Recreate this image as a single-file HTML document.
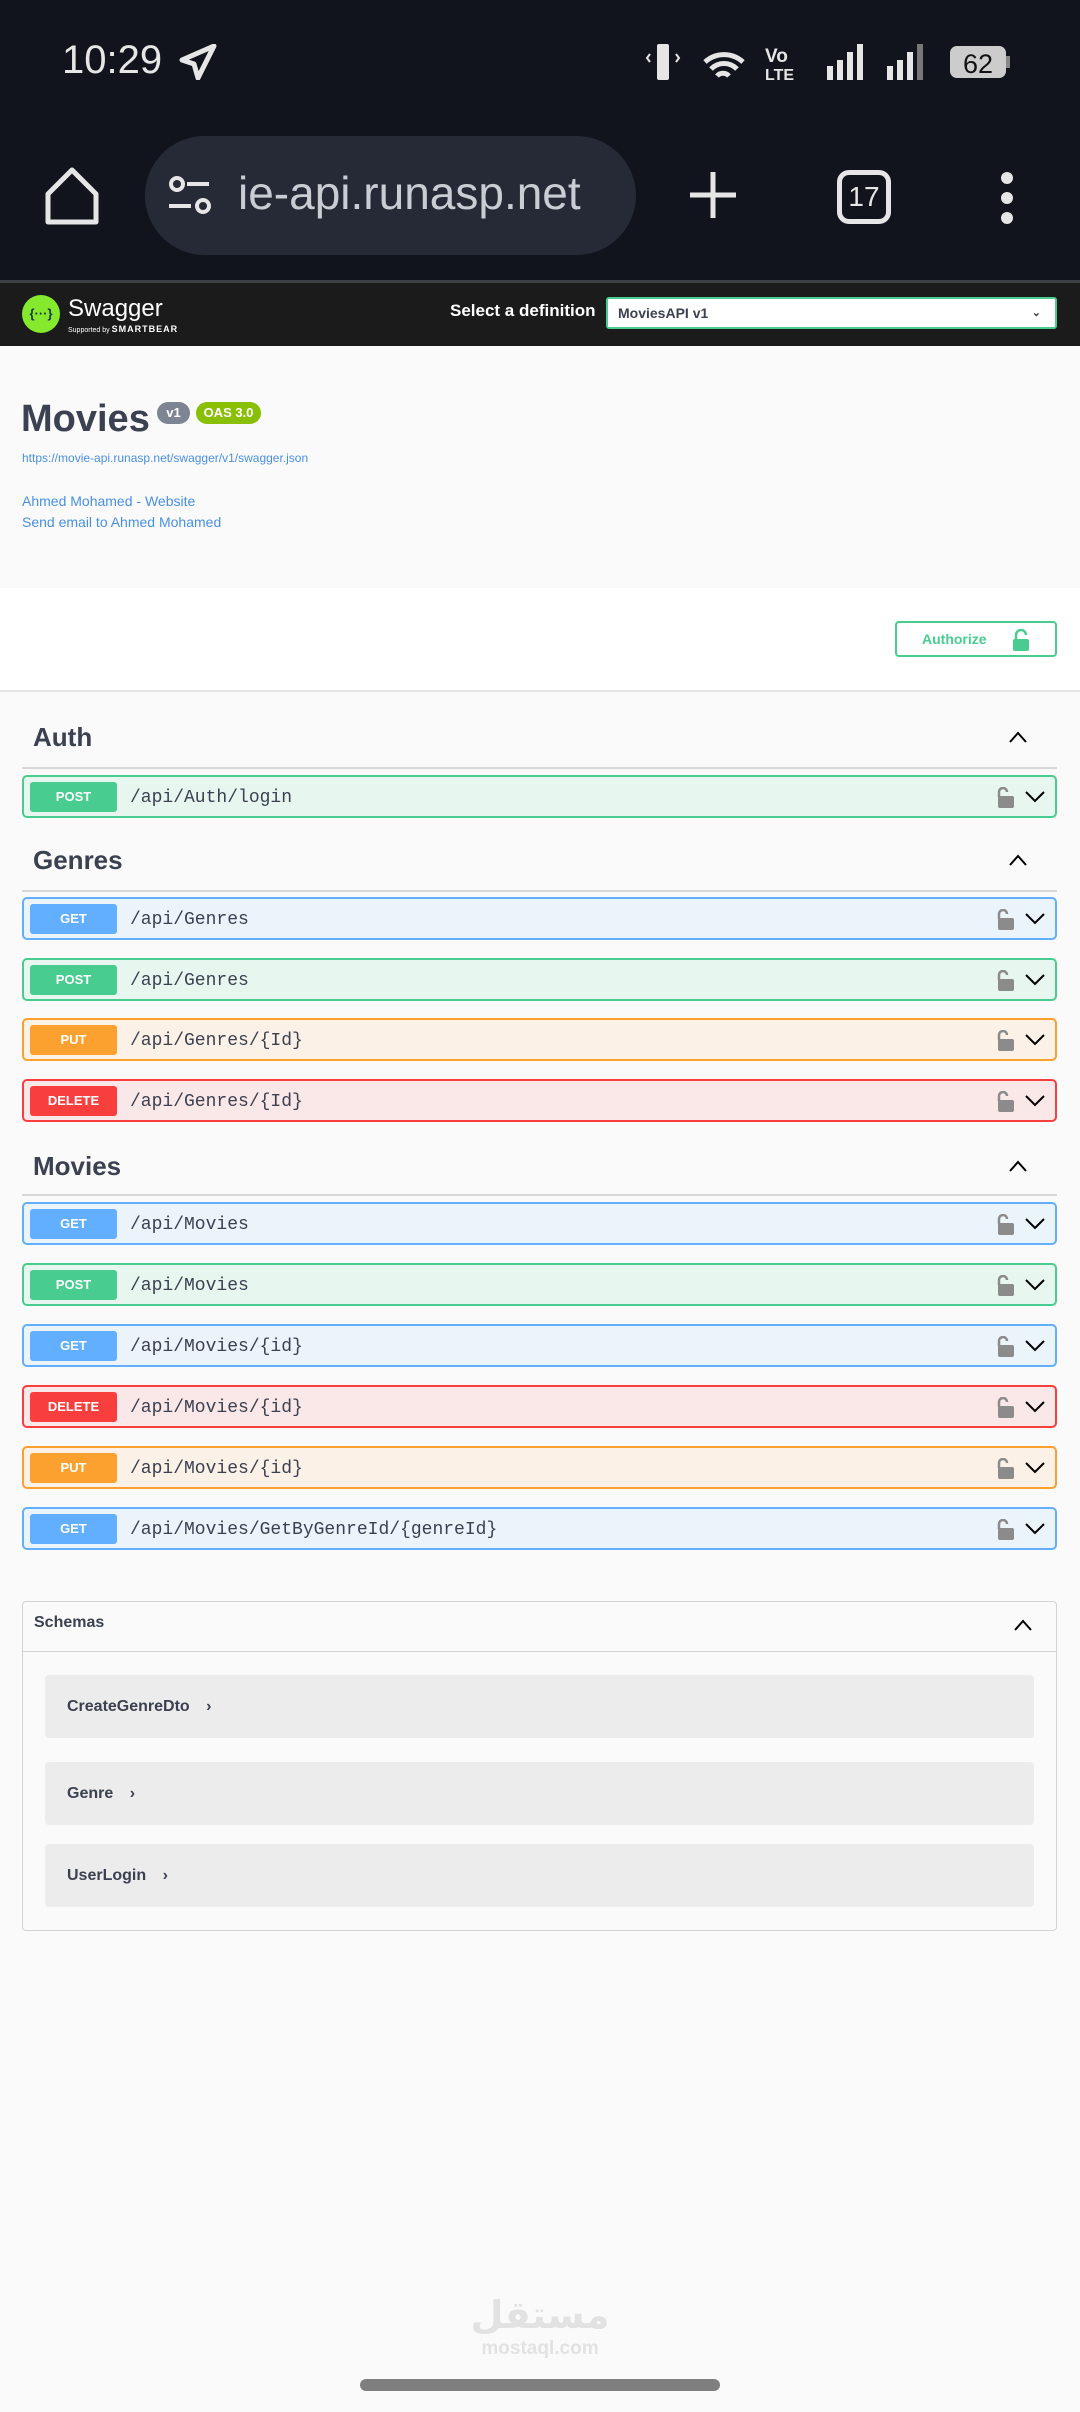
<!DOCTYPE html>
<html><head><meta charset="utf-8"><style>
*{margin:0;padding:0;box-sizing:border-box}
body{width:1080px;height:2412px;position:relative;background:#fafafa;font-family:"Liberation Sans",sans-serif;overflow:hidden}
.a{position:absolute}
.mono{font-family:"Liberation Mono","DejaVu Sans Mono",monospace}
.row{position:absolute;left:22px;width:1035px;height:43px;border:2px solid;border-radius:5px}
.badge{position:absolute;left:6px;top:5px;width:87px;height:30px;border-radius:3px;color:#fff;font-weight:bold;font-size:13px;text-align:center;line-height:30px}
.path{position:absolute;left:106px;top:2px;line-height:39px;font-size:18px;color:#3b4151}
.get{background:#ebf3fb;border-color:#61affe}.get .badge{background:#61affe}
.post{background:#e8f6f0;border-color:#49cc90}.post .badge{background:#49cc90}
.put{background:#fbf1e6;border-color:#fca130}.put .badge{background:#fca130}
.del{background:#fae7e7;border-color:#f93e3e}.del .badge{background:#f93e3e}
.lk{position:absolute;left:973px;top:10px}
.cv{position:absolute;left:1000px;top:12px}
.sh{position:absolute;left:33px;font-size:26px;font-weight:bold;color:#3b4151}
.sl{position:absolute;left:22px;width:1035px;height:2px;background:#d6d7d9}
.up{position:absolute;left:1008px}
.sc{position:absolute;left:45px;width:989px;height:63px;background:#ececec;border-radius:4px;font-size:16px;font-weight:bold;color:#3b4151;padding-left:22px;line-height:63px}
</style></head><body>
<div class="a" style="left:0;top:0;width:1080px;height:280px;background:#11141c"></div>
<div class="a" style="left:62px;top:38px;color:#e6e6e6;font-size:40px">10:29</div>
<svg class="a" style="left:178px;top:44px" width="40" height="36" viewBox="0 0 40 36"><path d="M36 2 L4 16 L16 20 L20 34 Z" fill="none" stroke="#e6e6e6" stroke-width="5" stroke-linejoin="round"/></svg>
<svg class="a" style="left:645px;top:40px" width="380" height="45" viewBox="0 0 380 45"><rect x="12" y="4" width="12" height="36" rx="2" fill="#e6e6e6"/><path d="M5 14l-3 4 3 4M31 14l3 4-3 4" stroke="#e6e6e6" stroke-width="2" fill="none"/><path d="M60 22a28 28 0 0 1 38 0M66 29a18 18 0 0 1 26 0M72 36a8 8 0 0 1 12 0" stroke="#e6e6e6" stroke-width="5" fill="none"/><text x="120" y="22" fill="#e6e6e6" font-size="19" font-weight="bold" font-family="Liberation Sans">Vo</text><text x="120" y="40" fill="#e6e6e6" font-size="16" font-weight="bold" font-family="Liberation Sans">LTE</text><rect x="182" y="26" width="6" height="14" fill="#e6e6e6"/><rect x="192" y="20" width="6" height="20" fill="#e6e6e6"/><rect x="202" y="12" width="6" height="28" fill="#e6e6e6"/><rect x="212" y="4" width="6" height="36" fill="#e6e6e6"/><rect x="242" y="26" width="6" height="14" fill="#e6e6e6"/><rect x="252" y="20" width="6" height="20" fill="#e6e6e6"/><rect x="262" y="12" width="6" height="28" fill="#e6e6e6"/><rect x="272" y="4" width="6" height="36" fill="#777"/><rect x="305" y="6" width="56" height="32" rx="7" fill="#ccc"/><rect x="361" y="16" width="4" height="12" fill="#888"/><text x="318" y="33" fill="#111" font-size="27" font-family="Liberation Sans">62</text></svg>
<svg class="a" style="left:42px;top:166px" width="60" height="60" viewBox="0 0 60 60"><path d="M6 28 L30 4 L54 28 V56 H6 Z" fill="none" stroke="#e6e6e6" stroke-width="5" stroke-linejoin="round"/></svg>
<div class="a" style="left:145px;top:136px;width:491px;height:119px;background:#252a36;border-radius:60px;overflow:hidden">
<svg class="a" style="left:22px;top:40px" width="45" height="42" viewBox="0 0 45 42"><circle cx="10" cy="8" r="6" fill="none" stroke="#e6e6e6" stroke-width="4"/><path d="M20 8h22M2 30h22" stroke="#e6e6e6" stroke-width="4"/><circle cx="36" cy="30" r="6" fill="none" stroke="#e6e6e6" stroke-width="4"/></svg>
<div class="a" style="left:93px;top:30px;color:#c9ccd3;font-size:46px;white-space:nowrap">ie-api.runasp.net</div></div>
<svg class="a" style="left:688px;top:170px" width="50" height="50"><path d="M25 2v46M2 25h46" stroke="#e6e6e6" stroke-width="5"/></svg>
<div class="a" style="left:837px;top:170px;width:54px;height:54px;border:5px solid #e6e6e6;border-radius:12px;color:#e6e6e6;font-size:28px;text-align:center;line-height:44px">17</div>
<svg class="a" style="left:997px;top:170px" width="20" height="56"><circle cx="10" cy="8" r="6" fill="#e6e6e6"/><circle cx="10" cy="28" r="6" fill="#e6e6e6"/><circle cx="10" cy="48" r="6" fill="#e6e6e6"/></svg>
<div class="a" style="left:0;top:280px;width:1080px;height:3px;background:#3d3f47"></div>
<div class="a" style="left:0;top:283px;width:1080px;height:63px;background:#1b1b1b"></div>
<div class="a" style="left:22px;top:295px;width:38px;height:38px;border-radius:50%;background:#85ea2d;color:#173647;font-size:13px;font-weight:bold;text-align:center;line-height:38px">{···}</div>
<div class="a" style="left:68px;top:295px;color:#fff;font-size:24px">Swagger</div>
<div class="a" style="left:68px;top:324px;color:#fff;font-size:7px">Supported by <b style="font-size:9px;letter-spacing:1px">SMARTBEAR</b></div>
<div class="a" style="left:450px;top:301px;color:#fff;font-size:17px;font-weight:bold">Select a definition</div>
<div class="a" style="left:606px;top:297px;width:451px;height:32px;background:#fff;border:2px solid #49cc90;border-radius:3px;font-size:14px;font-weight:bold;color:#3b4151;padding-left:10px;line-height:28px">MoviesAPI v1<span style="position:absolute;right:14px;font-size:11px">⌄</span></div>
<div class="a" style="left:21px;top:398px;font-size:38px;font-weight:bold;color:#3b4151">Movies</div>
<div class="a" style="left:157px;top:402px;width:33px;height:22px;border-radius:11px;background:#7d8492;color:#fff;font-size:13px;font-weight:bold;text-align:center;line-height:22px">v1</div>
<div class="a" style="left:196px;top:402px;width:65px;height:22px;border-radius:11px;background:#89bf04;color:#fff;font-size:13px;font-weight:bold;text-align:center;line-height:22px">OAS 3.0</div>
<div class="a" style="left:22px;top:451px;font-size:12px;color:#4990e2">https://movie-api.runasp.net/swagger/v1/swagger.json</div>
<div class="a" style="left:22px;top:493px;font-size:14px;color:#4990e2">Ahmed Mohamed - Website</div>
<div class="a" style="left:22px;top:514px;font-size:14px;color:#4990e2">Send email to Ahmed Mohamed</div>
<div class="a" style="left:0;top:588px;width:1080px;height:104px;background:#fff;border-bottom:2px solid #e6e6e6"></div>
<div class="a" style="left:895px;top:621px;width:162px;height:36px;border:2px solid #49cc90;border-radius:4px;color:#49cc90;font-size:14px;font-weight:bold;padding-left:25px;line-height:32px">Authorize
<svg class="a" style="left:115px;top:6px" width="18" height="22"><path d="M4 10V6a5 5 0 0 1 10 0" stroke="#49cc90" stroke-width="2.5" fill="none"/><rect x="1" y="10" width="16" height="12" rx="2" fill="#49cc90"/></svg></div>

<div class="sh" style="top:722px">Auth</div>
<svg class="up" style="top:730px" width="20" height="14"><path d="M2 12L10 3l8 9" stroke="#000" stroke-width="2" fill="none"/></svg>
<div class="sl" style="top:767px"></div>
<div class="row post" style="top:775px"><div class="badge">POST</div><div class="path mono">/api/Auth/login</div></div>

<div class="sh" style="top:845px">Genres</div>
<svg class="up" style="top:853px" width="20" height="14"><path d="M2 12L10 3l8 9" stroke="#000" stroke-width="2" fill="none"/></svg>
<div class="sl" style="top:890px"></div>
<div class="row get" style="top:897px"><div class="badge">GET</div><div class="path mono">/api/Genres</div></div>
<div class="row post" style="top:958px"><div class="badge">POST</div><div class="path mono">/api/Genres</div></div>
<div class="row put" style="top:1018px"><div class="badge">PUT</div><div class="path mono">/api/Genres/{Id}</div></div>
<div class="row del" style="top:1079px"><div class="badge">DELETE</div><div class="path mono">/api/Genres/{Id}</div></div>

<div class="sh" style="top:1151px">Movies</div>
<svg class="up" style="top:1159px" width="20" height="14"><path d="M2 12L10 3l8 9" stroke="#000" stroke-width="2" fill="none"/></svg>
<div class="sl" style="top:1194px"></div>
<div class="row get" style="top:1202px"><div class="badge">GET</div><div class="path mono">/api/Movies</div></div>
<div class="row post" style="top:1263px"><div class="badge">POST</div><div class="path mono">/api/Movies</div></div>
<div class="row get" style="top:1324px"><div class="badge">GET</div><div class="path mono">/api/Movies/{id}</div></div>
<div class="row del" style="top:1385px"><div class="badge">DELETE</div><div class="path mono">/api/Movies/{id}</div></div>
<div class="row put" style="top:1446px"><div class="badge">PUT</div><div class="path mono">/api/Movies/{id}</div></div>
<div class="row get" style="top:1507px"><div class="badge">GET</div><div class="path mono">/api/Movies/GetByGenreId/{genreId}</div></div>

<div class="a" style="left:22px;top:1601px;width:1035px;height:330px;border:1px solid #d3d3d3;border-radius:4px"></div>
<div class="a" style="left:34px;top:1614px;font-size:16px;font-weight:bold;color:#3b4151">Schemas</div>
<svg class="a" style="left:1013px;top:1618px" width="20" height="14"><path d="M2 12L10 3l8 9" stroke="#000" stroke-width="2" fill="none"/></svg>
<div class="a" style="left:23px;top:1651px;width:1033px;height:1px;background:#d3d3d3"></div>
<div class="sc" style="top:1675px">CreateGenreDto <span style="margin-left:12px">›</span></div>
<div class="sc" style="top:1762px">Genre <span style="margin-left:12px">›</span></div>
<div class="sc" style="top:1844px">UserLogin <span style="margin-left:12px">›</span></div>

<div class="a" style="left:470px;top:2295px;width:140px;text-align:center;color:#e2e2e2;font-size:38px;font-weight:bold;font-family:'DejaVu Sans',sans-serif;line-height:40px">مستقل</div>
<div class="a" style="left:470px;top:2338px;width:140px;text-align:center;color:#e2e2e2;font-size:19px;font-weight:bold">mostaql.com</div>
<div class="a" style="left:360px;top:2379px;width:360px;height:12px;border-radius:6px;background:#7f7f7f"></div>
<script>
document.querySelectorAll('.row').forEach(r=>{r.insertAdjacentHTML('beforeend','<svg class="lk" width="18" height="22"><path d="M5 10V5a4 4 0 0 1 8 0" stroke="#8b8b8b" stroke-width="2.5" fill="none" transform="translate(-3 0)"/><rect x="1" y="9" width="16" height="12" rx="2" fill="#8b8b8b"/></svg><svg class="cv" width="22" height="14"><path d="M2 3l9 9 9-9" stroke="#000" stroke-width="2" fill="none"/></svg>')});
</script>
</body></html>
